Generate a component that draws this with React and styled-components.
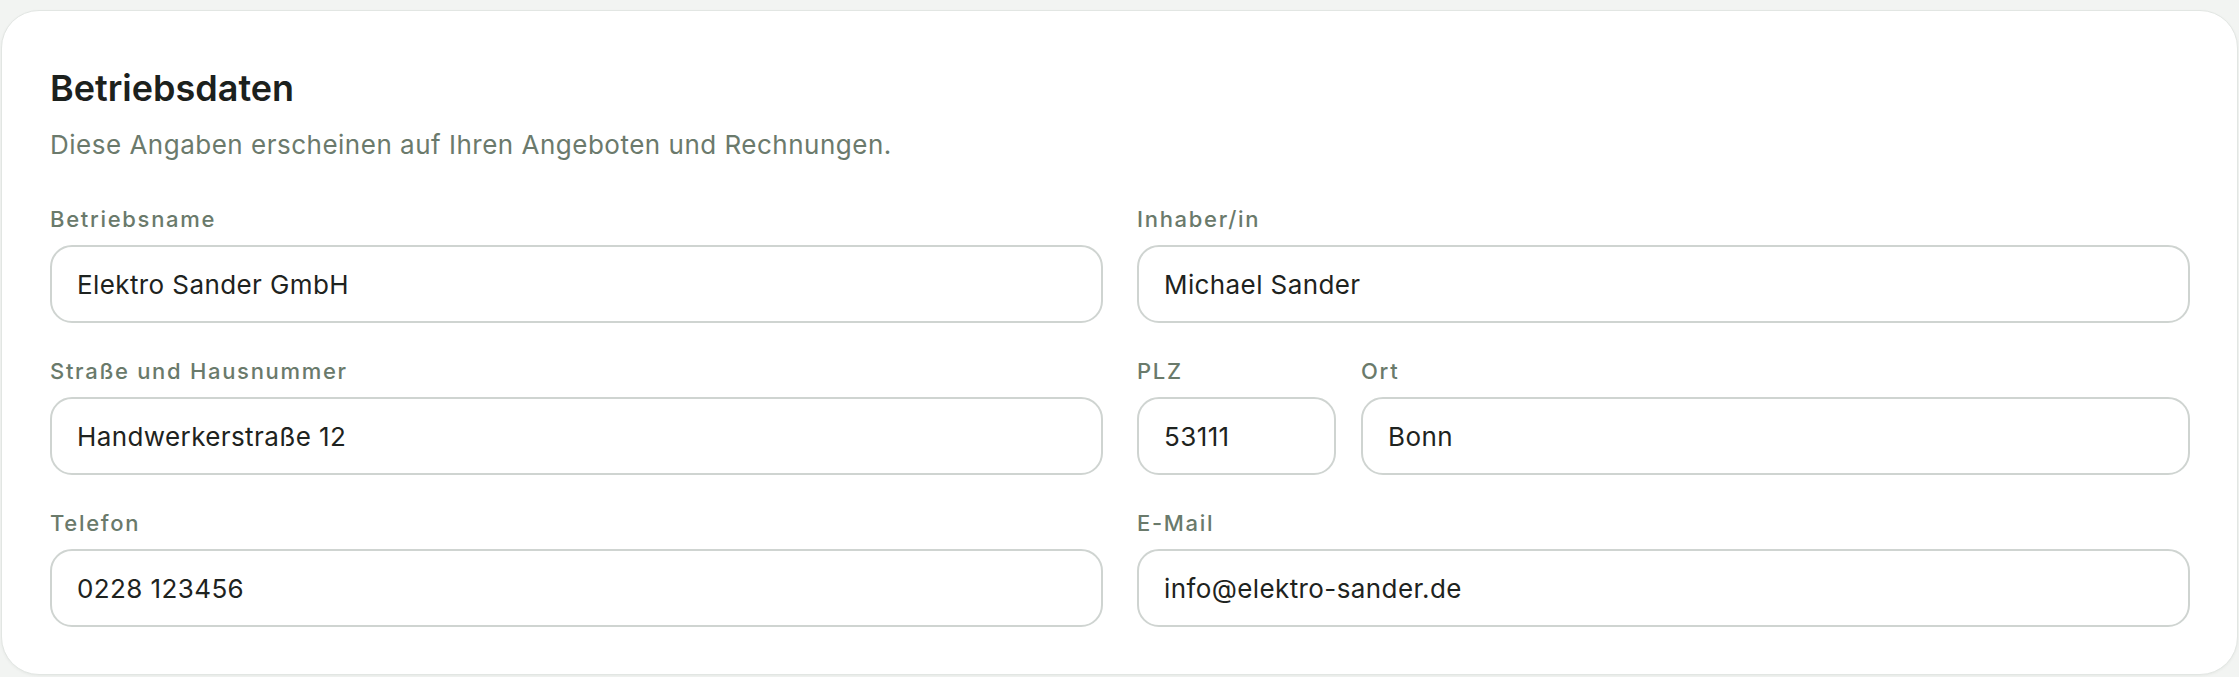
import React from "react";
import styled, { createGlobalStyle } from "styled-components";

const GlobalStyle = createGlobalStyle`
  html, body {
    margin: 0;
    padding: 0;
    background: #f2f4f2;
    font-family: Inter, "Liberation Sans", sans-serif;
  }
  * { box-sizing: border-box; }
`;

const Page = styled.main`
  padding: 10px 1px 2px 1px;
  height: 677px;
`;

const Card = styled.section`
  background: #ffffff;
  border: 1px solid #e2e6e3;
  border-radius: 38px;
  padding: 57px 47px 47px 48px;
  box-shadow: 0 1px 3px rgba(20, 30, 20, 0.05);
`;

const Title = styled.h2`
  margin: 0;
  font-size: 36px;
  line-height: 40px;
  font-weight: 600;
  color: #1c211d;
`;

const Subtitle = styled.p`
  margin: 21px 0 0;
  font-size: 26px;
  line-height: 32px;
  letter-spacing: 0.5px;
  color: #6b7a6c;
`;

const Grid = styled.div`
  margin-top: 44px;
  display: grid;
  grid-template-columns: 1fr 1fr;
  column-gap: 34px;
  row-gap: 34px;
`;

const Split = styled.div`
  display: grid;
  grid-template-columns: 199px 1fr;
  column-gap: 25px;
`;

const Field = styled.label`
  display: flex;
  flex-direction: column;
  gap: 12px;
  min-width: 0;
`;

const Label = styled.span`
  font-size: 22px;
  line-height: 28px;
  font-weight: 500;
  letter-spacing: 1.7px;
  color: #6a7a6b;
`;

const Input = styled.input`
  height: 78px;
  width: 100%;
  border: 2px solid #cfd4d1;
  border-radius: 22px;
  padding: 0 25px;
  font-family: inherit;
  font-size: 26px;
  letter-spacing: 0.4px;
  color: #1e2320;
  background: #fff;
  outline: none;
`;

function TextField({ label, value }) {
  return (
    <Field>
      <Label>{label}</Label>
      <Input defaultValue={value} />
    </Field>
  );
}

export default function App() {
  return (
    <>
      <GlobalStyle />
      <Page>
        <Card>
          <Title>Betriebsdaten</Title>
          <Subtitle>Diese Angaben erscheinen auf Ihren Angeboten und Rechnungen.</Subtitle>
          <Grid>
            <TextField label="Betriebsname" value="Elektro Sander GmbH" />
            <TextField label="Inhaber/in" value="Michael Sander" />
            <TextField label="Straße und Hausnummer" value="Handwerkerstraße 12" />
            <Split>
              <TextField label="PLZ" value="53111" />
              <TextField label="Ort" value="Bonn" />
            </Split>
            <TextField label="Telefon" value="0228 123456" />
            <TextField label="E-Mail" value="info@elektro-sander.de" />
          </Grid>
        </Card>
      </Page>
    </>
  );
}
